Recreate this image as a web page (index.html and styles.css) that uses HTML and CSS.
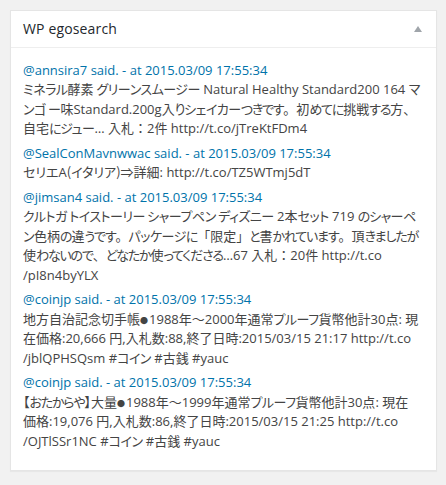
FILE: index.html
```html
<!DOCTYPE html>
<html lang="ja">
<head>
<meta charset="utf-8">
<title>WP egosearch</title>
<link rel="stylesheet" href="styles.css">
</head>
<body>
<div class="postbox">
  <div class="hndle-row">
    <h2 class="hndle">WP egosearch</h2>
    <span class="toggle"></span>
  </div>
  <div class="inside">
    <ul class="tweets">
      <li class="tweet">
        <a class="who" href="#">@annsira7 said. - at 2015.03/09 17:55:34</a>
        <div class="body">
          <span class="ln"><span class="ja"><span class="kk">ミネラル</span>酵素 <span class="kk">グリーンスムージー</span></span> Natural Healthy Standard200 164 <span class="ja"><span class="kk">マ</span></span></span>
          <span class="ln"><span class="ja"><span class="kk">ンゴ ー</span>味</span>Standard.200g<span class="ja">入<span class="hg">り</span><span class="kk">シェイカー</span><span class="hg">つきです</span><span class="pn">。</span>初<span class="hg">めてに</span>挑戦<span class="hg">する</span>方<span class="pn">、</span></span></span>
          <span class="ln"><span class="ja">自宅<span class="hg">に</span><span class="kk">ジュー</span></span>… <span class="ja">入札<span class="pn">：</span></span>2<span class="ja">件</span> http://t.co/jTreKtFDm4</span>
        </div>
      </li>
      <li class="tweet">
        <a class="who" href="#">@SealConMavnwwac said. - at 2015.03/09 17:55:34</a>
        <div class="body">
          <span class="ln"><span class="ja">セリエ</span>A<span class="ja">(イタリア)⇒詳細</span>: http://t.co/TZ5WTmj5dT</span>
        </div>
      </li>
      <li class="tweet">
        <a class="who" href="#">@jimsan4 said. - at 2015.03/09 17:55:34</a>
        <div class="body">
          <span class="ln"><span class="ja"><span class="kk">クルトガ トイストーリー シャープペン ディズニー</span></span> 2<span class="ja">本<span class="kk">セット</span></span> 719 <span class="ja"><span class="hg">の</span><span class="kk">シャーペ</span></span></span>
          <span class="ln"><span class="ja"><span class="kk">ン</span>色柄<span class="hg">の</span>違<span class="hg">うです</span><span class="pn">。</span><span class="kk">パッケージ</span><span class="hg">に</span><span class="pn">「</span>限定<span class="pn">」</span><span class="hg">と</span>書<span class="hg">かれています</span><span class="pn">。</span>頂<span class="hg">きましたが</span></span></span>
          <span class="ln"><span class="ja">使<span class="hg">わないので</span><span class="pn">、</span><span class="hg">どなたか</span>使<span class="hg">ってくださる</span></span>…67 <span class="ja">入札<span class="pn">：</span></span>20<span class="ja">件</span> http://t.co</span>
          <span class="ln">/pI8n4byYLX</span>
        </div>
      </li>
      <li class="tweet">
        <a class="who" href="#">@coinjp said. - at 2015.03/09 17:55:34</a>
        <div class="body">
          <span class="ln"><span class="ja">地方自治記念切手帳</span><span class="dot">●</span>1988<span class="ja">年〜</span>2000<span class="ja">年通常<span class="kk">プルーフ</span>貨幣他計</span>30<span class="ja">点</span>: <span class="ja">現</span></span>
          <span class="ln"><span class="ja">在価格</span>:20,666 <span class="ja">円</span>,<span class="ja">入札数</span>:88,<span class="ja">終了日時</span>:2015/03/15 21:17 http://t.co</span>
          <span class="ln">/jblQPHSQsm #<span class="ja"><span class="kk">コイン</span></span> #<span class="ja">古銭</span> #yauc</span>
        </div>
      </li>
      <li class="tweet">
        <a class="who" href="#">@coinjp said. - at 2015.03/09 17:55:34</a>
        <div class="body">
          <span class="ln"><span class="ja">【<span class="hg">おたからや</span>】大量</span><span class="dot">●</span>1988<span class="ja">年〜</span>1999<span class="ja">年通常<span class="kk">プルーフ</span>貨幣他計</span>30<span class="ja">点</span>: <span class="ja">現在</span></span>
          <span class="ln"><span class="ja">価格</span>:19,076 <span class="ja">円</span>,<span class="ja">入札数</span>:86,<span class="ja">終了日時</span>:2015/03/15 21:25 http://t.co</span>
          <span class="ln">/OJTlSSr1NC #<span class="ja"><span class="kk">コイン</span></span> #<span class="ja">古銭</span> #yauc</span>
        </div>
      </li>
    </ul>
  </div>
</div>
</body>
</html>
```

FILE: styles.css
```css
html, body {
  margin: 0;
  padding: 0;
  background: #f1f1f1;
}
body {
  padding: 10px 9px 10px 10px;
  font-family: "Open Sans", "Noto Sans CJK JP", sans-serif;
  font-size: 13px;
  line-height: 19.5px;
  color: #444;
}
.postbox {
  background: #fff;
  border: 1px solid #e5e5e5;
  box-shadow: 0 1px 1px rgba(0, 0, 0, 0.04);
}
.hndle-row {
  display: flex;
  align-items: center;
  justify-content: space-between;
  padding: 8px 14px 8px 12px;
  border-bottom: 1px solid #eee;
}
.hndle {
  margin: 0;
  font-size: 14px;
  line-height: 19.6px;
  font-weight: 400;
  letter-spacing: 0.15px;
  color: #23282d;
}
.toggle {
  width: 0;
  height: 0;
  border-left: 4.5px solid transparent;
  border-right: 4.5px solid transparent;
  border-bottom: 6px solid #a0a5aa;
}
.inside {
  padding: 13px 12px 14px 12px;
}
.tweets {
  list-style: none;
  margin: 0;
  padding: 0;
}
.tweet {
  margin: 0 0 5px;
}
.who {
  display: block;
  color: #0073aa;
  text-decoration: none;
}
.body {
  color: #444;
}
.ln {
  display: block;
  white-space: nowrap;
}
.ja {
  font-family: "Noto Sans CJK JP", sans-serif;
  font-size: 13px;
  line-height: 13px;
  font-feature-settings: "palt";
}
.kk {
  letter-spacing: -0.5px;
}
.hg {
  letter-spacing: -1.2px;
}
.pn {
  font-feature-settings: normal;
}
.dot {
  font-family: "Noto Sans CJK JP", sans-serif;
  font-size: 8px;
  line-height: 8px;
  margin: 0 1px 0 0;
}
```
